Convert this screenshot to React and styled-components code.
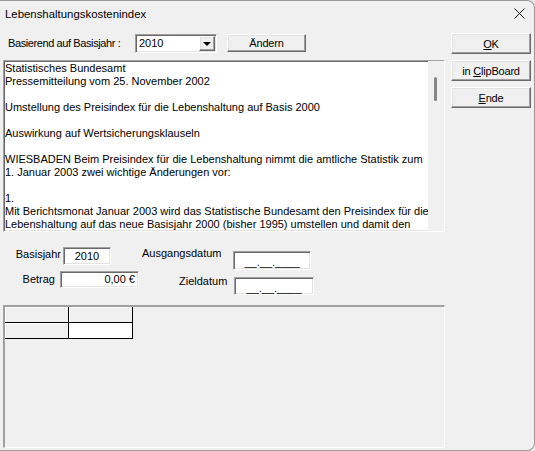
import React from "react";
import styled, { createGlobalStyle } from "styled-components";

const GlobalStyle = createGlobalStyle`
  html, body {
    margin: 0;
    padding: 0;
    background: #e9e9e9;
  }
  body {
    font-family: "Liberation Sans", Arial, sans-serif;
    font-size: 11px;
    color: #000;
  }
`;

const raised = `
  border: 1px solid;
  border-color: #fff #696969 #696969 #fff;
  box-shadow: inset -1px -1px #a0a0a0, inset 1px 1px #e3e3e3;
`;

const sunken = `
  border: 1px solid;
  border-color: #a0a0a0 #fff #fff #a0a0a0;
  box-shadow: inset 1px 1px #696969, inset -1px -1px #e3e3e3;
`;

const Window = styled.div`
  width: 535px;
  height: 451px;
  box-sizing: border-box;
  background: #f0f0f0;
  border: 1px solid #9a9a9a;
  border-left: none;
  border-radius: 0 8px 8px 0;
  display: flex;
  flex-direction: column;
  overflow: hidden;
`;

const TitleBar = styled.div`
  height: 25px;
  flex-shrink: 0;
  display: flex;
  align-items: center;
  justify-content: space-between;
  padding: 0 9px 0 5px;
  font-size: 11.4px;
`;

const CloseIcon = () => (
  <svg width="11" height="11" viewBox="0 0 11 11">
    <path d="M0.5 0.5 L10.5 10.5 M10.5 0.5 L0.5 10.5" stroke="#1a1a1a" strokeWidth="1" />
  </svg>
);

const Body = styled.div`
  flex: 1;
  display: flex;
  gap: 6px;
  padding-left: 3px;
`;

const MainColumn = styled.div`
  width: 442px;
  display: flex;
  flex-direction: column;
`;

const SideColumn = styled.div`
  width: 80px;
  display: flex;
  flex-direction: column;
  gap: 6px;
  padding-top: 7px;
`;

const Toolbar = styled.div`
  height: 34px;
  display: flex;
  align-items: center;
  padding-left: 5px;
`;

const Label = styled.span`
  width: 127px;
  white-space: nowrap;
  letter-spacing: -0.4px;
`;

const Select = styled.div`
  width: 82px;
  height: 19px;
  margin-right: 10px;
  box-sizing: border-box;
  ${sunken};
  background: #fff;
  display: flex;
  align-items: center;
  justify-content: space-between;
  padding: 0 1px 0 3px;
  font-size: 11px;
`;

const DropButton = styled.div`
  width: 16px;
  height: 15px;
  box-sizing: border-box;
  ${raised};
  background: #f0f0f0;
  display: flex;
  align-items: center;
  justify-content: center;
`;

const Arrow = styled.div`
  width: 0;
  height: 0;
  border-left: 4px solid transparent;
  border-right: 4px solid transparent;
  border-top: 4px solid #000;
  margin-top: 1px;
`;

const Button = styled.div`
  width: ${(p) => p.$width || 80}px;
  height: ${(p) => p.$height || 21}px;
  box-sizing: border-box;
  ${raised};
  background: #f0f0f0;
  display: flex;
  align-items: center;
  justify-content: center;
  font-size: 11px;
  letter-spacing: -0.2px;
  white-space: nowrap;
`;

const TextPanel = styled.div`
  height: 172px;
  box-sizing: border-box;
  ${sunken};
  background: #fff;
  display: flex;
`;

const TextBody = styled.div`
  flex: 1;
  padding: 1px 0 0 1px;
  line-height: 13px;
  overflow: hidden;
`;

const Line = styled.div`
  height: 13px;
  white-space: nowrap;
`;

const ScrollTrack = styled.div`
  width: 16px;
  background: #f0f0f0;
`;

const Thumb = styled.div`
  width: 3px;
  height: 24px;
  margin: 16px 0 0 6px;
  border-radius: 2px;
  background: #858585;
`;

const FieldsArea = styled.div`
  height: 73px;
  box-sizing: border-box;
  padding-top: 15px;
  display: flex;
  flex-direction: column;
  gap: 1px;
`;

const FieldRow = styled.div`
  display: flex;
  align-items: flex-start;
`;

const FieldLabel = styled.div`
  width: ${(p) => p.$width}px;
  box-sizing: border-box;
  text-align: ${(p) => (p.$right ? "right" : "left")};
  padding: ${(p) => (p.$right ? `0 ${p.$pad}px 0 0` : `0 0 0 ${p.$pad}px`)};
  line-height: ${(p) => p.$lh}px;
  white-space: nowrap;
`;

const Field = styled.div`
  width: ${(p) => p.$width}px;
  height: ${(p) => p.$height}px;
  margin-top: ${(p) => p.$top || 0}px;
  box-sizing: border-box;
  ${sunken};
  background: #fff;
  text-align: ${(p) => p.$align || "center"};
  padding: 0 3px;
  line-height: ${(p) => p.$height - 2}px;
`;

const DateMask = styled.span`
  display: inline-block;
  padding-top: 2px;
`;

const GridPanel = styled.div`
  height: 143px;
  box-sizing: border-box;
  border-style: solid;
  border-width: 2px 1px 1px 2px;
  border-color: #a0a0a0 #fff #fff #a0a0a0;
  background: #f0f0f0;
`;

const CellGrid = styled.div`
  display: grid;
  grid-template-columns: 64px 64px;
  grid-template-rows: 16px 16px;
  width: fit-content;
`;

const Cell = styled.div`
  box-sizing: border-box;
  border-right: 1px solid #000;
  border-bottom: 1px solid #000;
  background: ${(p) => (p.$data ? "#fff" : "#f0f0f0")};
  box-shadow: ${(p) => (p.$data ? "none" : "inset 1px 1px #fff")};
`;

const lines = [
  "Statistisches Bundesamt",
  "Pressemitteilung vom 25. November 2002",
  "",
  "Umstellung des Preisindex für die Lebenshaltung auf Basis 2000",
  "",
  "Auswirkung auf Wertsicherungsklauseln",
  "",
  "WIESBADEN Beim Preisindex für die Lebenshaltung nimmt die amtliche Statistik zum",
  "1. Januar 2003 zwei wichtige Änderungen vor:",
  "",
  "1.",
  "Mit Berichtsmonat Januar 2003 wird das Statistische Bundesamt den Preisindex für die",
  "Lebenshaltung auf das neue Basisjahr 2000 (bisher 1995) umstellen und damit den",
];

export default function App() {
  return (
    <>
      <GlobalStyle />
      <Window>
        <TitleBar>
          <span>Lebenshaltungskostenindex</span>
          <CloseIcon />
        </TitleBar>
        <Body>
          <MainColumn>
            <Toolbar>
              <Label>Basierend auf Basisjahr :</Label>
              <Select>
                <span>2010</span>
                <DropButton>
                  <Arrow />
                </DropButton>
              </Select>
              <Button $width={79} $height={18}>
                Ändern
              </Button>
            </Toolbar>
            <TextPanel>
              <TextBody>
                {lines.map((l, i) => (
                  <Line key={i}>{l}</Line>
                ))}
              </TextBody>
              <ScrollTrack>
                <Thumb />
              </ScrollTrack>
            </TextPanel>
            <FieldsArea>
              <FieldRow>
                <FieldLabel $width={60} $right $pad={2} $lh={14}>
                  Basisjahr
                </FieldLabel>
                <Field $width={48} $height={18}>
                  2010
                </Field>
                <FieldLabel $width={122} $pad={31} $lh={13}>
                  Ausgangsdatum
                </FieldLabel>
                <Field $width={78} $height={19} $top={4}>
                  <DateMask>__.__.____</DateMask>
                </Field>
              </FieldRow>
              <FieldRow>
                <FieldLabel $width={57} $right $pad={5} $lh={17}>
                  Betrag
                </FieldLabel>
                <Field $width={79} $height={17} $align="right">
                  0,00 €
                </Field>
                <FieldLabel $width={95} $pad={40} $lh={20}>
                  Zieldatum
                </FieldLabel>
                <Field $width={80} $height={18} $top={6}>
                  <DateMask>__.__.____</DateMask>
                </Field>
              </FieldRow>
            </FieldsArea>
            <GridPanel>
              <CellGrid>
                <Cell />
                <Cell />
                <Cell />
                <Cell $data />
              </CellGrid>
            </GridPanel>
          </MainColumn>
          <SideColumn>
            <Button>
              <u>O</u>K
            </Button>
            <Button>
              in&nbsp;<u>C</u>lipBoard
            </Button>
            <Button>
              <u>E</u>nde
            </Button>
          </SideColumn>
        </Body>
      </Window>
    </>
  );
}
